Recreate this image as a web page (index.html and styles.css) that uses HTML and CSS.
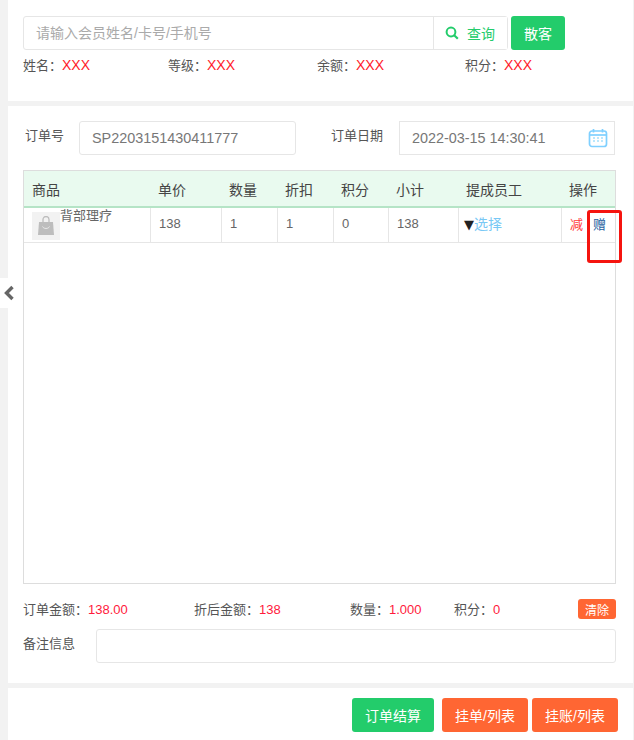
FILE: index.html
```html
<!DOCTYPE html>
<html lang="zh">
<head>
<meta charset="utf-8">
<title>订单</title>
<link rel="stylesheet" href="styles.css">
</head>
<body>
<div class="side-tab"><svg width="12" height="16" viewBox="0 0 12 16"><path d="M9.5 2 3.5 8 9.5 14" fill="none" stroke="#666" stroke-width="3.4"/></svg></div>
<main class="page">
  <section class="panel member">
    <div class="search-row">
      <div class="search-group">
        <div class="search-input">请输入会员姓名/卡号/手机号</div>
        <button class="search-btn"><svg width="14" height="14" viewBox="0 0 14 14"><circle cx="6" cy="6" r="4.4" fill="none" stroke="#23cc6b" stroke-width="2"/><path d="M9.2 9.2 12.8 12.8" stroke="#23cc6b" stroke-width="2.2"/></svg><span>查询</span></button>
      </div>
      <button class="btn btn-green guest">散客</button>
    </div>
    <div class="info-row">
      <div>姓名：<b class="red x">XXX</b></div>
      <div>等级：<b class="red x">XXX</b></div>
      <div>余额：<b class="red x">XXX</b></div>
      <div>积分：<b class="red x">XXX</b></div>
    </div>
  </section>

  <section class="panel order">
    <div class="order-head">
      <label class="order-label">订单号</label>
      <div class="field order-no">SP2203151430411777</div>
      <label class="order-label date-label">订单日期</label>
      <div class="field date-field">2022-03-15 14:30:41
        <svg class="cal" width="20" height="20" viewBox="0 0 20 20"><rect x="1.5" y="3" width="17" height="15.5" rx="2.5" fill="#fff" stroke="#7fd0ff" stroke-width="1.7"/><path d="M1.5 7h17" stroke="#7fd0ff" stroke-width="1.7"/><path d="M5.5 1v3.5M14.5 1v3.5" stroke="#7fd0ff" stroke-width="1.7"/><path d="M5 10h2M9 10h2M13 10h2M5 13h2M9 13h2M13 13h2" stroke="#a5dffc" stroke-width="1.6"/></svg>
      </div>
    </div>

    <div class="table-wrap">
      <table class="items">
        <colgroup>
          <col class="c1"><col class="c2"><col class="c3"><col class="c4"><col class="c5"><col class="c6"><col class="c7"><col class="c8">
        </colgroup>
        <thead>
          <tr><th>商品</th><th>单价</th><th>数量</th><th>折扣</th><th>积分</th><th>小计</th><th>提成员工</th><th>操作</th></tr>
        </thead>
        <tbody>
          <tr>
            <td class="goods"><div class="goods-inner"><span class="thumb"><svg width="16" height="20" viewBox="0 0 16 20"><path d="M1 6h14l1 13H0z" fill="#bdbdbd"/><path d="M5 7V3.5a3 3 0 0 1 6 0V7" fill="none" stroke="#bdbdbd" stroke-width="1.3"/><path d="M4.5 10.5c1 2.6 6 2.6 7 0" fill="none" stroke="#e8e8e8" stroke-width="1"/></svg></span><span class="goods-name">背部理疗</span></div></td>
            <td>138</td><td>1</td><td>1</td><td>0</td><td>138</td>
            <td class="staff"><span class="arrow">▼</span><a class="pick">选择</a></td>
            <td class="ops"><span class="minus">减</span><span class="gift">赠</span></td>
          </tr>
        </tbody>
      </table>
    </div>

    <div class="summary">
      <div>订单金额：<b class="red">138.00</b></div>
      <div>折后金额：<b class="red">138</b></div>
      <div>数量：<b class="red">1.000</b></div>
      <div>积分：<b class="red">0</b></div>
      <button class="btn-clear">清除</button>
    </div>
    <div class="remark">
      <label>备注信息</label>
      <div class="remark-input"></div>
    </div>
  </section>

  <section class="panel actions">
    <button class="btn btn-green settle">订单结算</button>
    <button class="btn btn-orange">挂单/列表</button>
    <button class="btn btn-orange">挂账/列表</button>
  </section>
</main>
<div class="annotation"></div>
</body>
</html>
```
FILE: styles.css
```css
* { box-sizing: border-box; }
html, body { margin: 0; padding: 0; }
body {
  width: 634px;
  height: 740px;
  overflow: hidden;
  background: #f2f2f2;
  font-family: "Liberation Sans", "Noto Sans CJK SC", sans-serif;
  font-size: 13px;
  color: #555;
  position: relative;
}
b { font-weight: normal; }
.red { color: #ff1a3c; }
.x { font-size: 14px; color: #ff1a2a; }
button { font-family: inherit; cursor: pointer; }

.page { margin-left: 8px; width: 625px; display: flex; flex-direction: column; gap: 5px; }
.panel { background: #fff; }

.side-tab {
  position: absolute; left: 0; top: 278px; width: 8px; height: 30px;
  background: #fff; overflow: visible; z-index: 1;
}
.side-tab svg { position: absolute; left: 3px; top: 7px; }

/* member */
.member { height: 101px; padding: 16px 15px 0; }
.search-row { display: flex; gap: 3px; }
.search-group { display: flex; width: 485px; height: 34px; border: 1px solid #e6e6e6; border-radius: 3px; }
.search-input { flex: 1; padding-left: 12px; line-height: 32px; font-size: 14px; color: #aaa; }
.search-btn {
  width: 74px; border: 0; border-left: 1px solid #e6e6e6; background: #fff;
  display: flex; align-items: center; justify-content: center; gap: 8px;
  color: #23cc6b; font-size: 14px; padding: 0 1px 0 0;
}
.btn { border: 0; border-radius: 3px; color: #fff; font-size: 14px; height: 34px; padding: 0; }
.btn-green { background: #23cc6b; }
.btn-orange { background: #ff6633; width: 86px; }
.guest { width: 54px; }
.info-row { display: grid; grid-template-columns: 145px 149px 148px 1fr; margin-top: 6px; line-height: 18px; }

/* order */
.order { height: 577px; padding: 15px 17px 0 15px; }
.order-head { display: flex; align-items: center; height: 34px; }
.order-label { width: 56px; margin-top: -8px; }
.date-label { width: 67px; padding-left: 0; }
.field { height: 34px; line-height: 33px; font-size: 14.4px; color: #777; border: 1px solid #e6e6e6; padding-left: 12px; }
.order-no { width: 217px; border-radius: 3px; margin-right: 36px; margin-left: -1px; }
.order-label:first-child { width: 57px; padding-left: 2px; }
.date-field { width: 216px; position: relative; }
.date-label { margin-left: -1px; width: 68px; }
.cal { position: absolute; right: 6px; top: 6px; }

.table-wrap { margin-top: 15px; height: 414px; border: 1px solid #ddd; width: 593px; }
.items { border-collapse: separate; border-spacing: 0; table-layout: fixed; width: 591px; font-size: 14px; }
.c1 { width: 127px; } .c2 { width: 71px; } .c3 { width: 56px; } .c4 { width: 56px; }
.c5 { width: 55px; } .c6 { width: 70px; } .c7 { width: 103px; } .c8 { width: 53px; }
.items th {
  height: 37px; background: #e9faef; border-bottom: 2px solid #b5e4c6;
  text-align: left; font-weight: normal; padding: 0 0 0 7px; color: #444;
}
.items th:first-child { padding-left: 8px; }
.items td {
  height: 35px; border-right: 1px solid #e6e6e6; border-bottom: 1px solid #e6e6e6;
  padding: 0 0 4px 8px; font-size: 13px; color: #666;
}
.items td:last-child { border-right: 0; }
.goods-inner { display: flex; align-items: flex-start; height: 28px; font-size: 13px; }
.items td.goods { vertical-align: top; padding: 4px 0 0 8px; }
.thumb { width: 28px; height: 28px; background: #f2f2f2; display: flex; align-items: center; justify-content: center; }
.goods-name { line-height: 13px; margin-top: -3px; }
.items td.staff { padding-left: 5px; font-size: 14px; }
.arrow { color: #222; font-size: 13px; font-family: "DejaVu Sans", sans-serif; }
.pick { color: #79c8f5; }
.items td.ops { font-size: 13px; padding-left: 8px; }
.minus { color: #ff3b3b; margin-right: 10px; }
.gift { color: #1f5f9f; }

.summary { display: grid; grid-template-columns: 171px 156px 104px 124px 38px; align-items: center; height: 20px; margin-top: 15px; font-size: 13px; }
.summary > div { white-space: nowrap; margin-top: -2px; }
.btn-clear { background: #ff6633; color: #fff; border: 0; border-radius: 3px; height: 20px; font-size: 12px; padding: 0; width: 38px; }
.remark { display: flex; align-items: center; margin-top: 10px; }
.remark label { width: 73px; margin-top: -8px; }
.remark-input { width: 520px; height: 34px; border: 1px solid #e6e6e6; border-radius: 3px; }

/* actions */
.actions { height: 52px; padding: 10px 15px 0 0; display: flex; justify-content: flex-end; gap: 0; }
.settle { width: 82px; margin-right: 8px; }
.actions .btn-orange + .btn-orange { margin-left: 4px; }

.annotation {
  position: absolute; left: 587px; top: 210px; width: 35px; height: 53px;
  border: 3px solid #f5140f; border-radius: 3px;
}
```
